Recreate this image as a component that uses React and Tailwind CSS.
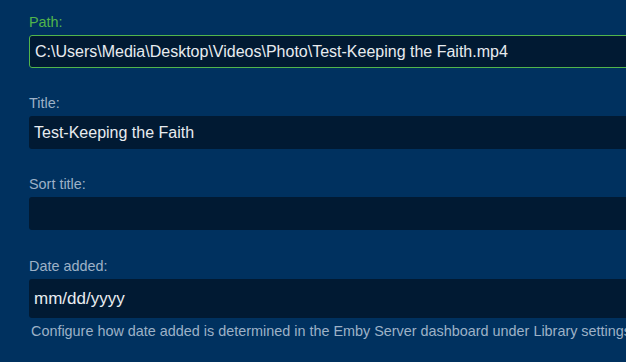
export default function App() {
  const label = "block text-[14.4px] leading-[17px] mb-[4px]";
  const input =
    "w-full bg-[#011a33] rounded-[3px] px-[5px] text-[16px] text-[#e8ecf0] flex items-center";
  return (
    <div
      className="w-[626px] h-[362px] overflow-hidden bg-[#00315f]"
      style={{ fontFamily: '"Liberation Sans", Arial, sans-serif' }}
    >
      <div className="w-[660px] pl-[29px] pt-[14px] flex flex-col gap-[27px]">
        <div>
          <div className={label + " text-[#52b54b]"}>Path:</div>
          <div className={input + " h-[33px] border border-[#52b54b] px-[4px] text-[15.85px]"}>
            C:\Users\Media\Desktop\Videos\Photo\Test-Keeping the Faith.mp4
          </div>
        </div>
        <div>
          <div className={label + " text-[#9db1c7]"}>Title:</div>
          <div className={input + " h-[33px]"}>Test-Keeping the Faith</div>
        </div>
        <div>
          <div className={label + " text-[#9db1c7]"}>Sort title:</div>
          <div className={input + " h-[33px]"}></div>
        </div>
        <div className="mt-[1px]">
          <div className={label + " text-[#9db1c7]"}>Date added:</div>
          <div className={input + " h-[39px] text-[17px]"}>mm/dd/yyyy</div>
          <div className="text-[14.4px] leading-[17px] text-[#9db1c7] mt-[5px] pl-[2px] whitespace-nowrap">
            Configure how date added is determined in the Emby Server dashboard under Library settings.
          </div>
        </div>
      </div>
    </div>
  );
}
